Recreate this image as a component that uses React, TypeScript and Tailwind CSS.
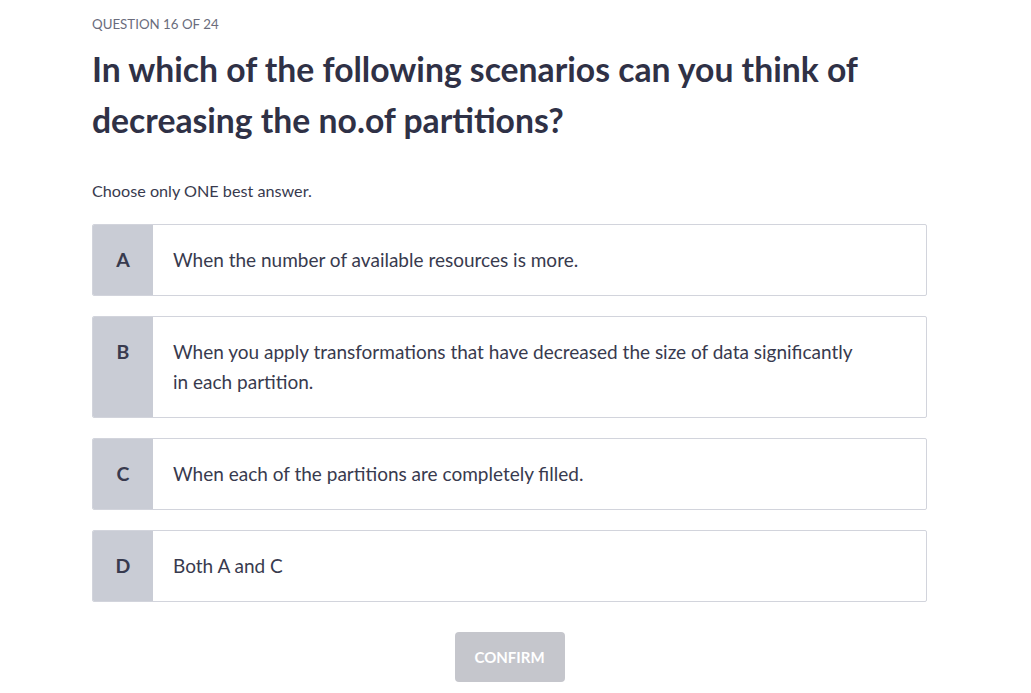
const options = [
  { letter: 'A', text: 'When the number of available resources is more.' },
  {
    letter: 'B',
    text: 'When you apply transformations that have decreased the size of data significantly in each partition.',
  },
  { letter: 'C', text: 'When each of the partitions are completely filled.' },
  { letter: 'D', text: 'Both A and C' },
];

export default function App() {
  return (
    <div className="min-h-screen bg-white font-['Lato',sans-serif] text-[#383a4e]">
      <div className="ml-[92px] w-[835px] pt-[14px]">
        <p className="text-[13.3px] leading-[20px] text-[#6a6c7c]">QUESTION 16 OF 24</p>
        <h1 className="mt-[10px] pr-[40px] text-[33.7px] font-bold leading-[51px] text-[#2f3146]">
          In which of the following scenarios can you think of decreasing the no.of partitions?
        </h1>

        <p className="mt-[33px] text-[16.2px] leading-[24px]">Choose only ONE best answer.</p>

        <div className="mt-[21px] flex flex-col gap-[20px]">
          {options.map((o) => (
            <div
              key={o.letter}
              className="flex overflow-hidden rounded-[2px] border border-[#d2d4dc] bg-white"
            >
              <div className="w-[60px] shrink-0 bg-[#c9ccd5] py-[20px] text-center text-[19.5px] font-bold leading-[30px] text-[#383a4e]">
                {o.letter}
              </div>
              <div className="flex-1 py-[20px] pl-[20px] pr-[70px] text-[19px] leading-[30px]">
                {o.text}
              </div>
            </div>
          ))}
        </div>

        <div className="mt-[30px] flex justify-center">
          <button className="h-[50px] w-[110px] rounded-[4px] bg-[#c5c6cc] text-[15px] font-bold uppercase text-white">
            Confirm
          </button>
        </div>
      </div>
    </div>
  );
}
